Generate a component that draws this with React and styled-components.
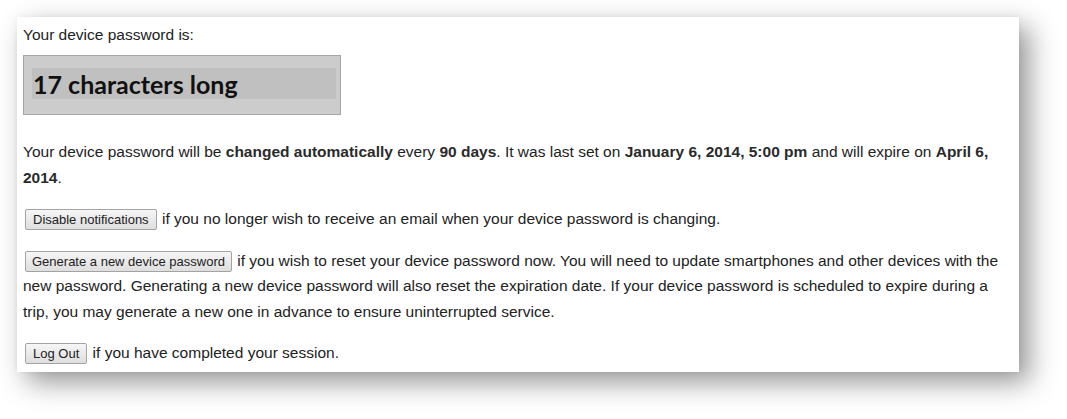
import styled, { createGlobalStyle } from "styled-components";

const GlobalStyle = createGlobalStyle`
    body {
        margin: 0;
        background: #ffffff;
    }
`;

const Page = styled.div`
    padding: 17px 48px 48px 17px;
`;

const Card = styled.div`
    box-sizing: border-box;
    width: 1002px;
    padding: 5px 6px 6px;
    background: #ffffff;
    box-shadow: 0 0 6px rgba(0, 0, 0, 0.05), 10px 10px 26px rgba(0, 0, 0, 0.42);
    font-family: "Liberation Sans", Arial, sans-serif;
    font-size: 15.5px;
    line-height: 25.5px;
    color: #222;
`;

const Label = styled.p`
    margin: 0;
`;

const PasswordBox = styled.div`
    box-sizing: border-box;
    width: 318px;
    height: 60px;
    margin: 7.5px 0 24px;
    padding: 12px 4px 15px 8px;
    background: #cccccc;
    border: 1px solid #a6a6a6;
`;

const PasswordText = styled.div`
    height: 31px;
    padding-left: 1px;
    background: #c0c0c0;
    font-family: Lato, "Open Sans", sans-serif;
    font-weight: 700;
    font-size: 25px;
    line-height: 33px;
    color: #111;
`;

const Paragraph = styled.p`
    margin: 0 0 16px;

    &:last-child {
        margin-bottom: 0;
    }

    b {
        color: #2a2a2a;
    }
`;

const Button = styled.button`
    height: 21px;
    margin: 0 1px 0 2px;
    padding: 0 7px;
    background: linear-gradient(#f6f6f6, #dedede);
    border: 1px solid #a3a3a3;
    border-radius: 2px;
    font-family: "Liberation Sans", Arial, sans-serif;
    font-size: 13px;
    line-height: 19px;
    color: #222;
    vertical-align: baseline;
`;

const WideButton = styled(Button)`
    padding: 0 6px;
`;

export default function App() {
    return (
        <Page>
            <GlobalStyle />
            <Card>
                <Label>Your device password is:</Label>
                <PasswordBox>
                    <PasswordText>17 characters long</PasswordText>
                </PasswordBox>
                <Paragraph>
                    Your device password will be <b>changed automatically</b> every{" "}
                    <b>90 days</b>. It was last set on <b>January 6, 2014, 5:00 pm</b> and
                    will expire on <b>April 6, 2014</b>.
                </Paragraph>
                <Paragraph>
                    <Button>Disable notifications</Button> if you no longer wish to receive an
                    email when your device password is changing.
                </Paragraph>
                <Paragraph>
                    <WideButton>Generate a new device password</WideButton> if you wish to reset your
                    device password now. You will need to update smartphones and other devices
                    with the new password. Generating a new device password will also reset the
                    expiration date. If your device password is scheduled to expire during a
                    trip, you may generate a new one in advance to ensure uninterrupted service.
                </Paragraph>
                <Paragraph>
                    <Button>Log Out</Button> if you have completed your session.
                </Paragraph>
            </Card>
        </Page>
    );
}
